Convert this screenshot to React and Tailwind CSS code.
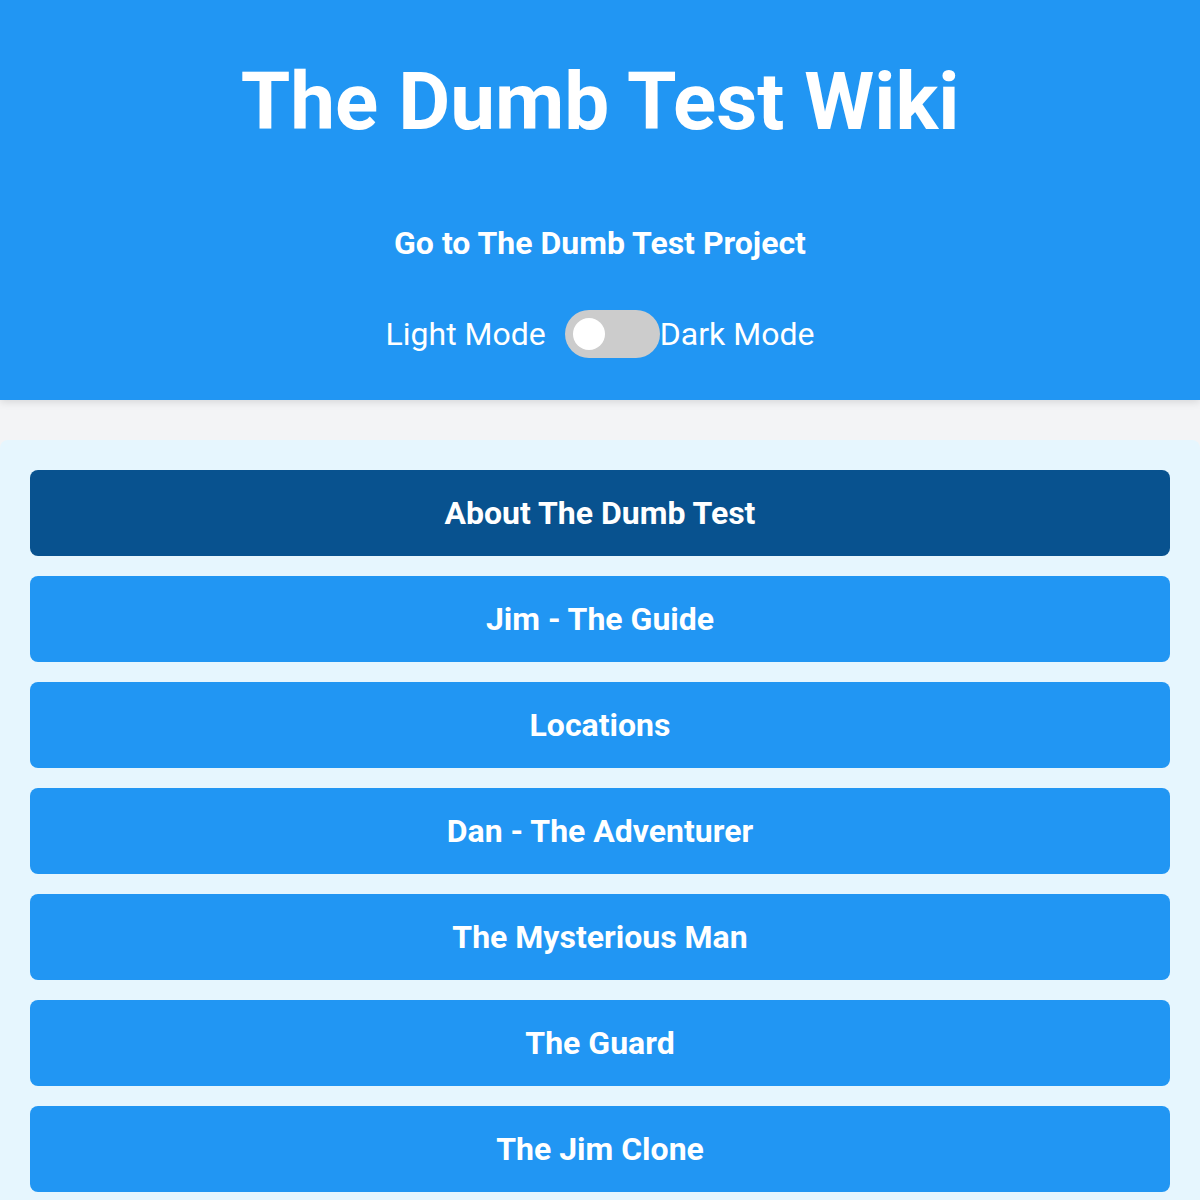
import { useState } from "react";

const pages = [
  "About The Dumb Test",
  "Jim - The Guide",
  "Locations",
  "Dan - The Adventurer",
  "The Mysterious Man",
  "The Guard",
  "The Jim Clone",
];

export default function App() {
  const [dark, setDark] = useState(false);

  return (
    <div className="min-h-screen bg-[#f3f4f6] font-['Roboto',sans-serif]">
      <header className="bg-[#2196f3] text-white text-center h-[400px] flex flex-col items-center shadow-[0_2px_8px_rgba(0,0,0,0.12)] relative">
        <h1 className="text-[80px] font-bold leading-none mt-[62px]">
          The Dumb Test Wiki
        </h1>
        <a href="#" className="text-[32px] font-bold mt-[85px] leading-none">
          Go to The Dumb Test Project
        </a>
        <div className="flex items-center mt-[51px] text-[32px] leading-none">
          <span className="mr-[19px]">Light Mode</span>
          <button
            onClick={() => setDark(!dark)}
            className="relative w-[95px] h-[48px] rounded-full bg-[#cccccc]"
          >
            <span className="absolute left-[8px] top-[8px] w-[32px] h-[32px] rounded-full bg-white" />
          </button>
          <span>Dark Mode</span>
        </div>
      </header>

      <main className="mt-[40px] bg-[#e6f6fe] rounded-t-[8px] p-[30px] flex flex-col gap-[20px]">
        {pages.map((page, i) => (
          <button
            key={page}
            className={
              "h-[86px] rounded-[8px] text-white text-[32px] font-bold " +
              (i === 0 ? "bg-[#08528f]" : "bg-[#2196f3]")
            }
          >
            {page}
          </button>
        ))}
      </main>
    </div>
  );
}
